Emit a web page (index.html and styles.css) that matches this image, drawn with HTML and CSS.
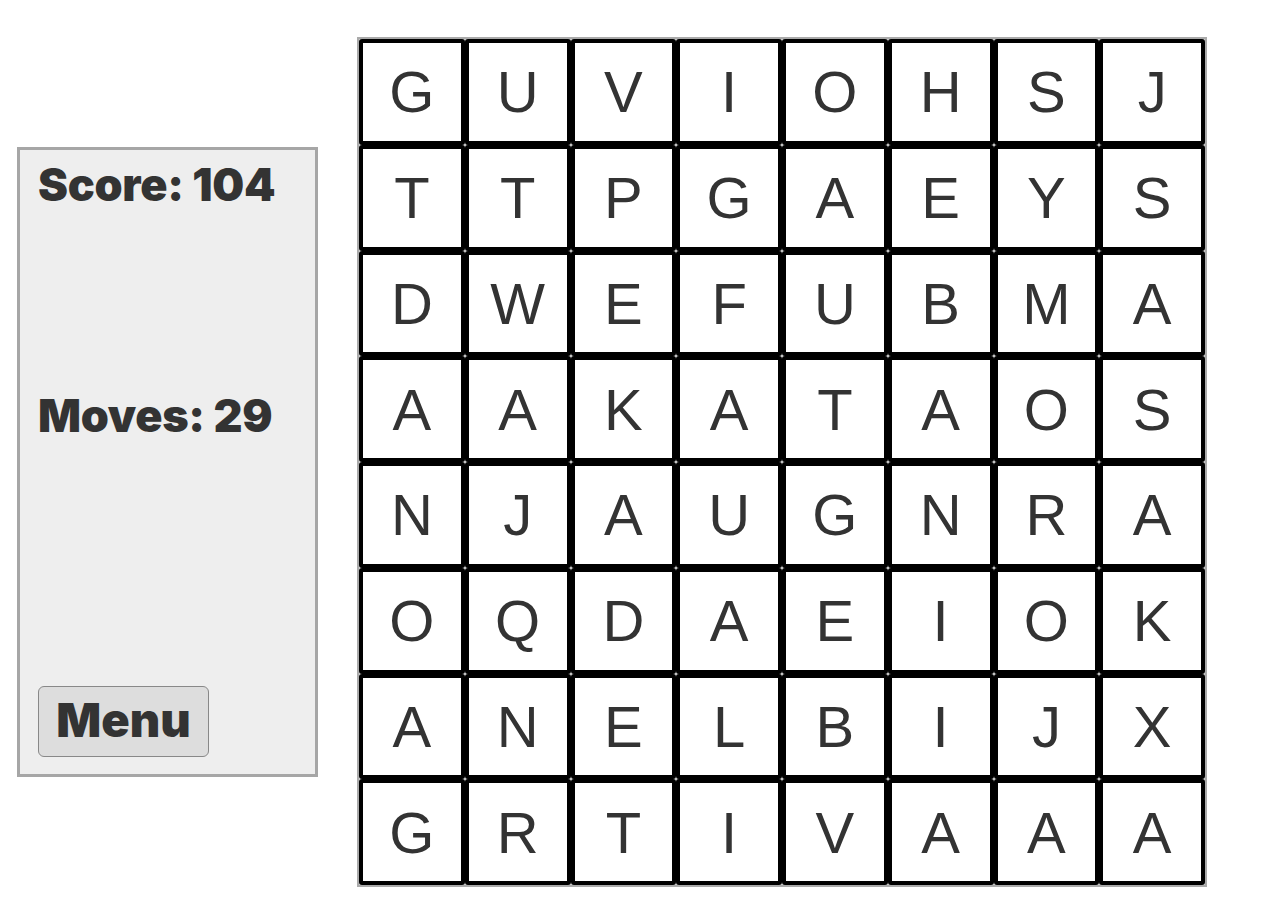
FILE: index.html
```html
<!DOCTYPE html>
<html>
<head>
<meta charset="utf-8">
<link rel="stylesheet" href="styles.css">
</head>
<body>
<div class="game">
  <div class="panel">
    <div class="stat score">Score: 104</div>
    <div class="stat moves">Moves: 29</div>
    <button class="menu-btn">Menu</button>
  </div>
  <div class="board">
    <div class="cell">G</div><div class="cell">U</div><div class="cell">V</div><div class="cell">I</div><div class="cell">O</div><div class="cell">H</div><div class="cell">S</div><div class="cell">J</div>
    <div class="cell">T</div><div class="cell">T</div><div class="cell">P</div><div class="cell">G</div><div class="cell">A</div><div class="cell">E</div><div class="cell">Y</div><div class="cell">S</div>
    <div class="cell">D</div><div class="cell">W</div><div class="cell">E</div><div class="cell">F</div><div class="cell">U</div><div class="cell">B</div><div class="cell">M</div><div class="cell">A</div>
    <div class="cell">A</div><div class="cell">A</div><div class="cell">K</div><div class="cell">A</div><div class="cell">T</div><div class="cell">A</div><div class="cell">O</div><div class="cell">S</div>
    <div class="cell">N</div><div class="cell">J</div><div class="cell">A</div><div class="cell">U</div><div class="cell">G</div><div class="cell">N</div><div class="cell">R</div><div class="cell">A</div>
    <div class="cell">O</div><div class="cell">Q</div><div class="cell">D</div><div class="cell">A</div><div class="cell">E</div><div class="cell">I</div><div class="cell">O</div><div class="cell">K</div>
    <div class="cell">A</div><div class="cell">N</div><div class="cell">E</div><div class="cell">L</div><div class="cell">B</div><div class="cell">I</div><div class="cell">J</div><div class="cell">X</div>
    <div class="cell">G</div><div class="cell">R</div><div class="cell">T</div><div class="cell">I</div><div class="cell">V</div><div class="cell">A</div><div class="cell">A</div><div class="cell">A</div>
  </div>
</div>
</body>
</html>
```
FILE: styles.css
```css
html, body {
  margin: 0;
  padding: 0;
  background: #ffffff;
}

.game {
  display: flex;
  align-items: center;
  gap: 39px;
  padding: 37px 0 0 17px;
}

.panel {
  box-sizing: border-box;
  width: 301px;
  height: 630px;
  border: 3px solid #a6a6a6;
  background: #eeeeee;
  display: flex;
  flex-direction: column;
  align-items: flex-start;
  padding: 11px 18px 17px 18px;
  font-family: "Inter", "Lato", sans-serif;
  font-weight: 900;
  color: #333333;
}

.stat {
  font-size: 45px;
  line-height: 48px;
  letter-spacing: -0.3px;
}

.moves {
  margin-top: 183px;
}

.menu-btn {
  margin-top: auto;
  box-sizing: border-box;
  width: 171px;
  height: 71px;
  border: 1px solid #888888;
  border-radius: 6px;
  background: #dddddd;
  font-family: "Inter", "Lato", sans-serif;
  font-weight: 900;
  font-size: 47px;
  color: #333333;
  padding: 0 0 4px 0;
  letter-spacing: 0;
}

.board {
  box-sizing: border-box;
  width: 850px;
  height: 850px;
  border: 2px solid #aaaaaa;
  background: #d8d8d8;
  display: grid;
  grid-template-columns: repeat(8, 1fr);
  grid-template-rows: repeat(8, 1fr);
}

.cell {
  box-sizing: border-box;
  border: 4px solid #000000;
  border-radius: 3px;
  background: #ffffff;
  display: flex;
  align-items: center;
  justify-content: center;
  font-family: "Liberation Sans", Arial, sans-serif;
  font-size: 58px;
  color: #333333;
}
```
